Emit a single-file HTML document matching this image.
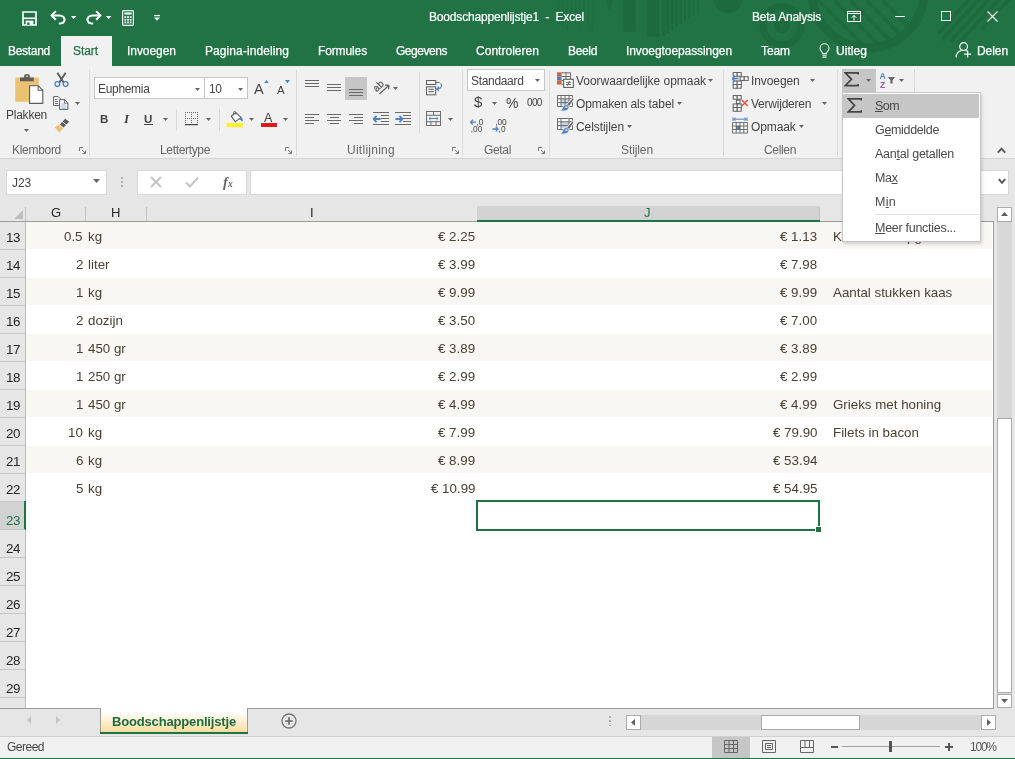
<!DOCTYPE html>
<html><head><meta charset="utf-8"><title>Boodschappenlijstje1 - Excel</title>
<style>
html,body{margin:0;padding:0;}
body{width:1015px;height:759px;overflow:hidden;position:relative;background:#fff;font-family:"Liberation Sans",sans-serif;}
.b{position:absolute;display:block;box-sizing:border-box;}
.t{position:absolute;display:block;white-space:pre;will-change:transform;}
u{text-decoration:underline;text-underline-offset:1px;}
</style></head><body>
<div class="b" style="left:0px;top:0px;width:1015px;height:66px;background:#217346;"></div>
<svg class="b" style="left:540px;top:0px;" width="475" height="66" viewBox="0 0 475 66">
<defs><clipPath id="uclip"><circle cx="328" cy="-8" r="52"/></clipPath></defs>
<g fill="#1d6a3f">
<rect x="18.0" y="0" width="1.6" height="20" opacity=".55"/><rect x="22.2" y="0" width="1.6" height="25" opacity=".55"/><rect x="26.4" y="0" width="1.6" height="30" opacity=".55"/><rect x="30.6" y="0" width="1.6" height="20" opacity=".55"/><rect x="34.8" y="0" width="1.6" height="25" opacity=".55"/><rect x="39.0" y="0" width="1.6" height="30" opacity=".55"/><rect x="43.2" y="0" width="1.6" height="20" opacity=".55"/><rect x="47.4" y="0" width="1.6" height="25" opacity=".55"/><rect x="51.6" y="0" width="1.6" height="30" opacity=".55"/>
<path d="M66 0H73L69.5 11Z"/>
<path d="M83.4 0H95.4V29Q95.4 32 92.4 32H86.4Q83.4 32 83.4 29Z"/>
<path d="M107.3 0H119.2V37H110.3Q107.3 37 107.3 34Z"/>
<rect x="122.0" y="0" width="3.0" height="36.0"/><rect x="126.4" y="0" width="2.8" height="33.1"/><rect x="130.8" y="0" width="2.6" height="30.2"/><rect x="135.2" y="0" width="2.4" height="27.3"/><rect x="139.6" y="0" width="2.2" height="24.4"/><rect x="144.0" y="0" width="2.0" height="21.5"/><rect x="148.4" y="0" width="1.8" height="18.6"/><rect x="152.8" y="0" width="1.6" height="15.7"/><rect x="157.2" y="0" width="1.4" height="12.8"/>
<path d="M173.4 0h29.2a14.6 13 0 0 1-29.2 0z"/>
</g>
<g fill="none" stroke="#1d6a3f">
<circle cx="242" cy="25.5" r="19" stroke-width="7"/>
<circle cx="242" cy="25.5" r="5" stroke-width="6"/>
<circle cx="328" cy="-8" r="56" stroke-width="9"/>
<g clip-path="url(#uclip)" stroke-width="4"><path d="M272 -6l60 60M282 -12l60 60M292 -18l60 60M302 -24l60 60M312 -30l60 60"/></g>
<path d="M442 -4l-40 44M452 -4l-42 46M462 -4l-44 48M432 -4l-34 38M472 -4l-30 33" stroke-width="4"/>
</g></svg>
<div class="b" style="left:61px;top:36px;width:51px;height:30px;background:#f1f1f1;"></div>
<div class="b" style="left:0px;top:66px;width:1015px;height:93px;background:#f1f1f1;"></div>
<div class="b" style="left:0px;top:158px;width:1015px;height:1px;background:#d4d4d4;"></div>
<div class="b" style="left:0px;top:159px;width:1015px;height:63px;background:#e6e6e6;"></div>
<span class="t" style="top:9.0px;line-height:16px;font-size:12px;color:#fff;letter-spacing:-0.170px;left:429px;-webkit-text-stroke:0.2px;">Boodschappenlijstje1  -  Excel</span>
<span class="t" style="top:9.0px;line-height:16px;font-size:12px;color:#fff;letter-spacing:-0.234px;left:752px;-webkit-text-stroke:0.2px;">Beta Analysis</span>
<span class="t" style="top:43.0px;line-height:16px;font-size:12px;color:#fff;letter-spacing:-0.290px;left:8px;-webkit-text-stroke:0.25px;">Bestand</span>
<span class="t" style="top:43.0px;line-height:16px;font-size:12px;color:#217346;letter-spacing:-0.068px;left:73px;-webkit-text-stroke:0.25px;">Start</span>
<span class="t" style="top:43.0px;line-height:16px;font-size:12px;color:#fff;letter-spacing:-0.047px;left:127px;-webkit-text-stroke:0.25px;">Invoegen</span>
<span class="t" style="top:43.0px;line-height:16px;font-size:12px;color:#fff;letter-spacing:0.085px;left:205px;-webkit-text-stroke:0.25px;">Pagina-indeling</span>
<span class="t" style="top:43.0px;line-height:16px;font-size:12px;color:#fff;letter-spacing:-0.126px;left:318px;-webkit-text-stroke:0.25px;">Formules</span>
<span class="t" style="top:43.0px;line-height:16px;font-size:12px;color:#fff;letter-spacing:-0.463px;left:396px;-webkit-text-stroke:0.25px;">Gegevens</span>
<span class="t" style="top:43.0px;line-height:16px;font-size:12px;color:#fff;letter-spacing:0.027px;left:476px;-webkit-text-stroke:0.25px;">Controleren</span>
<span class="t" style="top:43.0px;line-height:16px;font-size:12px;color:#fff;letter-spacing:-0.338px;left:568px;-webkit-text-stroke:0.25px;">Beeld</span>
<span class="t" style="top:43.0px;line-height:16px;font-size:12px;color:#fff;letter-spacing:-0.079px;left:626px;-webkit-text-stroke:0.25px;">Invoegtoepassingen</span>
<span class="t" style="top:43.0px;line-height:16px;font-size:12px;color:#fff;letter-spacing:-0.086px;left:761px;-webkit-text-stroke:0.25px;">Team</span>
<span class="t" style="top:43.0px;line-height:16px;font-size:12px;color:#fff;letter-spacing:0.053px;left:836px;-webkit-text-stroke:0.25px;">Uitleg</span>
<span class="t" style="top:43.0px;line-height:16px;font-size:12px;color:#fff;letter-spacing:-0.071px;left:977px;-webkit-text-stroke:0.25px;">Delen</span>
<div class="b" style="left:89px;top:70px;width:1px;height:86px;background:#dadada;"></div>
<div class="b" style="left:296px;top:70px;width:1px;height:86px;background:#dadada;"></div>
<div class="b" style="left:462px;top:70px;width:1px;height:86px;background:#dadada;"></div>
<div class="b" style="left:549px;top:70px;width:1px;height:86px;background:#dadada;"></div>
<div class="b" style="left:723px;top:70px;width:1px;height:86px;background:#dadada;"></div>
<div class="b" style="left:837px;top:70px;width:1px;height:86px;background:#dadada;"></div>
<span class="t" style="top:142.0px;line-height:16px;font-size:12px;color:#666;letter-spacing:-0.295px;left:12px;">Klembord</span>
<span class="t" style="top:142.0px;line-height:16px;font-size:12px;color:#666;letter-spacing:-0.337px;left:160px;">Lettertype</span>
<span class="t" style="top:142.0px;line-height:16px;font-size:12px;color:#666;letter-spacing:0.265px;left:347px;">Uitlijning</span>
<span class="t" style="top:142.0px;line-height:16px;font-size:12px;color:#666;letter-spacing:-0.336px;left:484px;">Getal</span>
<span class="t" style="top:142.0px;line-height:16px;font-size:12px;color:#666;letter-spacing:-0.098px;left:621px;">Stijlen</span>
<span class="t" style="top:142.0px;line-height:16px;font-size:12px;color:#666;letter-spacing:-0.337px;left:764px;">Cellen</span>
<svg class="b" style="left:79px;top:147px;" width="7" height="7" viewBox="0 0 7 7"><path d="M0.5 4V0.5H4M3 3L6.5 6.5M6.5 3.5V6.5H3.5" fill="none" stroke="#777" stroke-width="1"/></svg>
<svg class="b" style="left:285px;top:147px;" width="7" height="7" viewBox="0 0 7 7"><path d="M0.5 4V0.5H4M3 3L6.5 6.5M6.5 3.5V6.5H3.5" fill="none" stroke="#777" stroke-width="1"/></svg>
<svg class="b" style="left:452px;top:147px;" width="7" height="7" viewBox="0 0 7 7"><path d="M0.5 4V0.5H4M3 3L6.5 6.5M6.5 3.5V6.5H3.5" fill="none" stroke="#777" stroke-width="1"/></svg>
<svg class="b" style="left:538px;top:147px;" width="7" height="7" viewBox="0 0 7 7"><path d="M0.5 4V0.5H4M3 3L6.5 6.5M6.5 3.5V6.5H3.5" fill="none" stroke="#777" stroke-width="1"/></svg>
<span class="t" style="top:107.0px;line-height:16px;font-size:12px;color:#444;letter-spacing:-0.242px;left:6px;">Plakken</span>
<svg class="b" style="left:24.0px;top:128.5px;" width="5" height="3" viewBox="0 0 5 3"><path d="M0 0H5L2.5 3Z" fill="#666"/></svg>
<svg class="b" style="left:75.0px;top:101.5px;" width="5" height="3" viewBox="0 0 5 3"><path d="M0 0H5L2.5 3Z" fill="#666"/></svg>
<div class="b" style="left:94px;top:77px;width:111px;height:22px;background:#fff;border:1px solid #c6c6c6;"></div>
<div class="b" style="left:204px;top:77px;width:44px;height:22px;background:#fff;border:1px solid #c6c6c6;"></div>
<span class="t" style="top:81.0px;line-height:16px;font-size:12px;color:#444;letter-spacing:-0.317px;left:97.5px;">Euphemia</span>
<span class="t" style="top:81.0px;line-height:16px;font-size:12px;color:#444;letter-spacing:-0.424px;left:208.5px;">10</span>
<svg class="b" style="left:195.0px;top:88.0px;" width="5" height="3" viewBox="0 0 5 3"><path d="M0 0H5L2.5 3Z" fill="#666"/></svg>
<svg class="b" style="left:238.0px;top:88.0px;" width="5" height="3" viewBox="0 0 5 3"><path d="M0 0H5L2.5 3Z" fill="#666"/></svg>
<span class="t" style="top:110.8px;line-height:16px;font-size:11.5px;color:#444;letter-spacing:0.295px;font-weight:700;left:100px;">B</span>
<span class="t" style="top:110.8px;line-height:16px;font-size:12px;color:#444;font-weight:700;font-style:italic;left:123.5px;font-family:'Liberation Serif',serif;font-size:13px;">I</span>
<span class="t" style="top:110.6px;line-height:16px;font-size:11.5px;color:#444;letter-spacing:0.395px;font-weight:700;left:144.3px;">U</span>
<div class="b" style="left:144.3px;top:124px;width:8.8px;height:1.1px;background:#444;"></div>
<svg class="b" style="left:163.0px;top:118.0px;" width="5" height="3" viewBox="0 0 5 3"><path d="M0 0H5L2.5 3Z" fill="#666"/></svg>
<svg class="b" style="left:206.0px;top:118.0px;" width="5" height="3" viewBox="0 0 5 3"><path d="M0 0H5L2.5 3Z" fill="#666"/></svg>
<svg class="b" style="left:249.0px;top:118.0px;" width="5" height="3" viewBox="0 0 5 3"><path d="M0 0H5L2.5 3Z" fill="#666"/></svg>
<svg class="b" style="left:283.0px;top:118.0px;" width="5" height="3" viewBox="0 0 5 3"><path d="M0 0H5L2.5 3Z" fill="#666"/></svg>
<div class="b" style="left:176px;top:109px;width:1px;height:22px;background:#dadada;"></div>
<div class="b" style="left:219px;top:109px;width:1px;height:22px;background:#dadada;"></div>
<div class="b" style="left:345px;top:77px;width:22.3px;height:23px;background:#c6c6c6;"></div>
<svg class="b" style="left:393.2px;top:86.5px;" width="5" height="3" viewBox="0 0 5 3"><path d="M0 0H5L2.5 3Z" fill="#666"/></svg>
<svg class="b" style="left:447.9px;top:118.0px;" width="5" height="3" viewBox="0 0 5 3"><path d="M0 0H5L2.5 3Z" fill="#666"/></svg>
<div class="b" style="left:418.5px;top:72px;width:1px;height:61px;background:#dadada;"></div>
<div class="b" style="left:467px;top:69px;width:78px;height:22px;background:#fff;border:1px solid #c6c6c6;"></div>
<span class="t" style="top:72.7px;line-height:16px;font-size:12px;color:#444;letter-spacing:-0.320px;left:470.5px;">Standaard</span>
<svg class="b" style="left:535.0px;top:79.0px;" width="5" height="3" viewBox="0 0 5 3"><path d="M0 0H5L2.5 3Z" fill="#666"/></svg>
<span class="t" style="top:94.3px;line-height:16px;font-size:15px;color:#444;letter-spacing:0.458px;left:474.2px;">$</span>
<svg class="b" style="left:492.2px;top:101.5px;" width="5" height="3" viewBox="0 0 5 3"><path d="M0 0H5L2.5 3Z" fill="#666"/></svg>
<span class="t" style="top:94.8px;line-height:16px;font-size:14px;color:#444;letter-spacing:1.052px;left:506px;">%</span>
<span class="t" style="top:95.3px;line-height:16px;font-size:10px;color:#444;letter-spacing:-0.628px;left:526.6px;">000</span>
<span class="t" style="top:73.0px;line-height:16px;font-size:12px;color:#444;letter-spacing:-0.034px;left:576px;">Voorwaardelijke opmaak</span>
<svg class="b" style="left:708.0px;top:79.3px;" width="5" height="3" viewBox="0 0 5 3"><path d="M0 0H5L2.5 3Z" fill="#666"/></svg>
<span class="t" style="top:96.0px;line-height:16px;font-size:12px;color:#444;letter-spacing:-0.121px;left:576px;">Opmaken als tabel</span>
<svg class="b" style="left:677.0px;top:102.3px;" width="5" height="3" viewBox="0 0 5 3"><path d="M0 0H5L2.5 3Z" fill="#666"/></svg>
<span class="t" style="top:119.0px;line-height:16px;font-size:12px;color:#444;letter-spacing:-0.069px;left:576px;">Celstijlen</span>
<svg class="b" style="left:627.0px;top:125.1px;" width="5" height="3" viewBox="0 0 5 3"><path d="M0 0H5L2.5 3Z" fill="#666"/></svg>
<span class="t" style="top:73.0px;line-height:16px;font-size:12px;color:#444;letter-spacing:-0.085px;left:751.3px;">Invoegen</span>
<svg class="b" style="left:810.0px;top:79.3px;" width="5" height="3" viewBox="0 0 5 3"><path d="M0 0H5L2.5 3Z" fill="#666"/></svg>
<span class="t" style="top:96.0px;line-height:16px;font-size:12px;color:#444;letter-spacing:-0.227px;left:751.3px;">Verwijderen</span>
<svg class="b" style="left:822.1px;top:102.3px;" width="5" height="3" viewBox="0 0 5 3"><path d="M0 0H5L2.5 3Z" fill="#666"/></svg>
<span class="t" style="top:119.0px;line-height:16px;font-size:12px;color:#444;letter-spacing:-0.109px;left:751.3px;">Opmaak</span>
<svg class="b" style="left:799.0px;top:125.1px;" width="5" height="3" viewBox="0 0 5 3"><path d="M0 0H5L2.5 3Z" fill="#666"/></svg>
<div class="b" style="left:841.5px;top:69px;width:34px;height:23.5px;background:#c6c6c6;"></div>
<svg class="b" style="left:866.2px;top:78.8px;" width="5" height="3" viewBox="0 0 5 3"><path d="M0 0H5L2.5 3Z" fill="#666"/></svg>
<svg class="b" style="left:899.0px;top:78.8px;" width="5" height="3" viewBox="0 0 5 3"><path d="M0 0H5L2.5 3Z" fill="#666"/></svg>
<div class="b" style="left:914px;top:69px;width:1px;height:23px;background:#dadada;"></div>
<svg class="b" style="left:996.5px;top:147.3px;" width="9" height="7" viewBox="0 0 9 7"><path d="M0.8 5.6L4.5 1.6L8.2 5.6" fill="none" stroke="#5a5a5a" stroke-width="2"/></svg>
<div class="b" style="left:5.5px;top:169.5px;width:101px;height:25px;background:#fff;border:1px solid #d8d8d8;"></div>
<span class="t" style="top:174.5px;line-height:16px;font-size:12px;color:#444;letter-spacing:-0.116px;left:12px;">J23</span>
<svg class="b" style="left:93.0px;top:179.0px;" width="7" height="4" viewBox="0 0 7 4"><path d="M0 0H7L3.5 4Z" fill="#666"/></svg>
<div class="b" style="left:121.3px;top:177px;width:1.8px;height:1.8px;background:#b0b0b0;"></div>
<div class="b" style="left:121.3px;top:181px;width:1.8px;height:1.8px;background:#b0b0b0;"></div>
<div class="b" style="left:121.3px;top:185.2px;width:1.8px;height:1.8px;background:#b0b0b0;"></div>
<div class="b" style="left:137px;top:169.5px;width:109.5px;height:25px;background:#fff;border:1px solid #d8d8d8;"></div>
<div class="b" style="left:250px;top:169.5px;width:759px;height:25px;background:#fff;border:1px solid #d8d8d8;"></div>
<svg class="b" style="left:150px;top:176px;" width="12" height="12" viewBox="0 0 12 12"><path d="M1 1L11 11M11 1L1 11" stroke="#c3c3c3" stroke-width="1.9" fill="none"/></svg>
<svg class="b" style="left:185px;top:176px;" width="14" height="12" viewBox="0 0 14 12"><path d="M1 6.5L5 10.5L13 1.5" stroke="#c3c3c3" stroke-width="2" fill="none"/></svg>
<span class="t" style="top:173.5px;line-height:16px;font-size:13px;color:#666;font-weight:700;font-style:italic;left:222.5px;font-family:'Liberation Serif',serif;font-size:14.5px;">f</span>
<span class="t" style="top:176.0px;line-height:16px;font-size:9.5px;color:#666;font-weight:700;font-style:italic;left:228px;font-family:'Liberation Serif',serif;">x</span>
<svg class="b" style="left:997.5px;top:178px;" width="8" height="7" viewBox="0 0 8 7"><path d="M0.8 1.2L4 4.8L7.2 1.2" fill="none" stroke="#555" stroke-width="2"/></svg>
<div class="b" style="left:26px;top:222px;width:968px;height:487px;background:#fff;"></div>
<div class="b" style="left:0px;top:204px;width:994px;height:17px;background:#e6e6e6;"></div>
<div class="b" style="left:477px;top:205.5px;width:342px;height:15.5px;background:#d2d2d2;"></div>
<div class="b" style="left:477px;top:220px;width:343px;height:2px;background:#217346;"></div>
<div class="b" style="left:0px;top:221px;width:994px;height:1px;background:#9b9b9b;"></div>
<div class="b" style="left:477px;top:220px;width:343px;height:2px;background:#217346;"></div>
<div class="b" style="left:25px;top:207px;width:1px;height:14px;background:#c3c3c3;"></div>
<div class="b" style="left:85px;top:207px;width:1px;height:14px;background:#c3c3c3;"></div>
<div class="b" style="left:146px;top:207px;width:1px;height:14px;background:#c3c3c3;"></div>
<div class="b" style="left:819px;top:207px;width:1px;height:13px;background:#c3c3c3;"></div>
<svg class="b" style="left:13.5px;top:209.5px;" width="9" height="9" viewBox="0 0 9 9"><path d="M9 0V9H0Z" fill="#bdbdbd"/></svg>
<span class="t" style="top:204.5px;line-height:16px;font-size:13px;color:#262626;left:50.9441171875px;">G</span>
<span class="t" style="top:204.5px;line-height:16px;font-size:13px;color:#262626;left:111.3058828125px;">H</span>
<span class="t" style="top:204.5px;line-height:16px;font-size:13px;color:#262626;left:310.1941171875px;">I</span>
<span class="t" style="top:204.5px;line-height:16px;font-size:13px;color:#217346;left:644.25px;">J</span>
<div class="b" style="left:0px;top:222px;width:25px;height:487px;background:#e6e6e6;"></div>
<div class="b" style="left:25px;top:222px;width:1px;height:487px;background:#bcbcbc;"></div>
<div class="b" style="left:0px;top:249px;width:25px;height:1px;background:#c6c6c6;"></div>
<span class="t" style="top:228.7px;line-height:18px;font-size:13.33px;color:#262626;left:5.8864371875px;letter-spacing:-0.35px;">13</span>
<div class="b" style="left:0px;top:277px;width:25px;height:1px;background:#c6c6c6;"></div>
<span class="t" style="top:256.7px;line-height:18px;font-size:13.33px;color:#262626;left:5.8864371875px;letter-spacing:-0.35px;">14</span>
<div class="b" style="left:0px;top:305px;width:25px;height:1px;background:#c6c6c6;"></div>
<span class="t" style="top:284.7px;line-height:18px;font-size:13.33px;color:#262626;left:5.8864371875px;letter-spacing:-0.35px;">15</span>
<div class="b" style="left:0px;top:333px;width:25px;height:1px;background:#c6c6c6;"></div>
<span class="t" style="top:312.7px;line-height:18px;font-size:13.33px;color:#262626;left:5.8864371875px;letter-spacing:-0.35px;">16</span>
<div class="b" style="left:0px;top:361px;width:25px;height:1px;background:#c6c6c6;"></div>
<span class="t" style="top:340.7px;line-height:18px;font-size:13.33px;color:#262626;left:5.8864371875px;letter-spacing:-0.35px;">17</span>
<div class="b" style="left:0px;top:389px;width:25px;height:1px;background:#c6c6c6;"></div>
<span class="t" style="top:368.7px;line-height:18px;font-size:13.33px;color:#262626;left:5.8864371875px;letter-spacing:-0.35px;">18</span>
<div class="b" style="left:0px;top:417px;width:25px;height:1px;background:#c6c6c6;"></div>
<span class="t" style="top:396.7px;line-height:18px;font-size:13.33px;color:#262626;left:5.8864371875px;letter-spacing:-0.35px;">19</span>
<div class="b" style="left:0px;top:445px;width:25px;height:1px;background:#c6c6c6;"></div>
<span class="t" style="top:424.7px;line-height:18px;font-size:13.33px;color:#262626;left:5.8864371875px;letter-spacing:-0.35px;">20</span>
<div class="b" style="left:0px;top:473px;width:25px;height:1px;background:#c6c6c6;"></div>
<span class="t" style="top:452.7px;line-height:18px;font-size:13.33px;color:#262626;left:5.8864371875px;letter-spacing:-0.35px;">21</span>
<div class="b" style="left:0px;top:501px;width:25px;height:1px;background:#c6c6c6;"></div>
<span class="t" style="top:480.7px;line-height:18px;font-size:13.33px;color:#262626;left:5.8864371875px;letter-spacing:-0.35px;">22</span>
<div class="b" style="left:0px;top:502px;width:25px;height:28px;background:#d2d2d2;"></div>
<div class="b" style="left:24px;top:501px;width:2px;height:29px;background:#217346;"></div>
<div class="b" style="left:0px;top:529px;width:25px;height:1px;background:#c6c6c6;"></div>
<span class="t" style="top:512.2px;line-height:18px;font-size:13.33px;color:#217346;left:5.8864371875px;letter-spacing:-0.35px;">23</span>
<div class="b" style="left:0px;top:557px;width:25px;height:1px;background:#c6c6c6;"></div>
<span class="t" style="top:540.2px;line-height:18px;font-size:13.33px;color:#262626;left:5.8864371875px;letter-spacing:-0.35px;">24</span>
<div class="b" style="left:0px;top:585px;width:25px;height:1px;background:#c6c6c6;"></div>
<span class="t" style="top:568.2px;line-height:18px;font-size:13.33px;color:#262626;left:5.8864371875px;letter-spacing:-0.35px;">25</span>
<div class="b" style="left:0px;top:613px;width:25px;height:1px;background:#c6c6c6;"></div>
<span class="t" style="top:596.2px;line-height:18px;font-size:13.33px;color:#262626;left:5.8864371875px;letter-spacing:-0.35px;">26</span>
<div class="b" style="left:0px;top:641px;width:25px;height:1px;background:#c6c6c6;"></div>
<span class="t" style="top:624.2px;line-height:18px;font-size:13.33px;color:#262626;left:5.8864371875px;letter-spacing:-0.35px;">27</span>
<div class="b" style="left:0px;top:669px;width:25px;height:1px;background:#c6c6c6;"></div>
<span class="t" style="top:652.2px;line-height:18px;font-size:13.33px;color:#262626;left:5.8864371875px;letter-spacing:-0.35px;">28</span>
<div class="b" style="left:0px;top:697px;width:25px;height:1px;background:#c6c6c6;"></div>
<span class="t" style="top:680.2px;line-height:18px;font-size:13.33px;color:#262626;left:5.8864371875px;letter-spacing:-0.35px;">29</span>
<div class="b" style="left:0px;top:725px;width:25px;height:1px;background:#c6c6c6;"></div>
<div class="b" style="left:26px;top:221.5px;width:966px;height:27.8px;background:#f9f7f3;"></div>
<span class="t" style="top:229.2px;line-height:16px;font-size:13.33px;color:#493f33;right:932px;">0.5</span>
<span class="t" style="top:229.2px;line-height:16px;font-size:13.33px;color:#493f33;left:88px;">kg</span>
<span class="t" style="top:229.2px;line-height:16px;font-size:13.33px;color:#493f33;right:539.5px;">€ 2.25</span>
<span class="t" style="top:229.2px;line-height:16px;font-size:13.33px;color:#493f33;right:198px;">€ 1.13</span>
<span class="t" style="top:229.2px;line-height:16px;font-size:13.33px;color:#493f33;left:833px;">Kaas en ei opgeteld</span>
<span class="t" style="top:257.2px;line-height:16px;font-size:13.33px;color:#493f33;right:932px;">2</span>
<span class="t" style="top:257.2px;line-height:16px;font-size:13.33px;color:#493f33;left:88px;">liter</span>
<span class="t" style="top:257.2px;line-height:16px;font-size:13.33px;color:#493f33;right:539.5px;">€ 3.99</span>
<span class="t" style="top:257.2px;line-height:16px;font-size:13.33px;color:#493f33;right:198px;">€ 7.98</span>
<div class="b" style="left:26px;top:277.5px;width:966px;height:27.8px;background:#f9f7f3;"></div>
<span class="t" style="top:285.2px;line-height:16px;font-size:13.33px;color:#493f33;right:932px;">1</span>
<span class="t" style="top:285.2px;line-height:16px;font-size:13.33px;color:#493f33;left:88px;">kg</span>
<span class="t" style="top:285.2px;line-height:16px;font-size:13.33px;color:#493f33;right:539.5px;">€ 9.99</span>
<span class="t" style="top:285.2px;line-height:16px;font-size:13.33px;color:#493f33;right:198px;">€ 9.99</span>
<span class="t" style="top:285.2px;line-height:16px;font-size:13.33px;color:#493f33;left:833px;">Aantal stukken kaas</span>
<span class="t" style="top:313.2px;line-height:16px;font-size:13.33px;color:#493f33;right:932px;">2</span>
<span class="t" style="top:313.2px;line-height:16px;font-size:13.33px;color:#493f33;left:88px;">dozijn</span>
<span class="t" style="top:313.2px;line-height:16px;font-size:13.33px;color:#493f33;right:539.5px;">€ 3.50</span>
<span class="t" style="top:313.2px;line-height:16px;font-size:13.33px;color:#493f33;right:198px;">€ 7.00</span>
<div class="b" style="left:26px;top:333.5px;width:966px;height:27.8px;background:#f9f7f3;"></div>
<span class="t" style="top:341.2px;line-height:16px;font-size:13.33px;color:#493f33;right:932px;">1</span>
<span class="t" style="top:341.2px;line-height:16px;font-size:13.33px;color:#493f33;left:88px;">450 gr</span>
<span class="t" style="top:341.2px;line-height:16px;font-size:13.33px;color:#493f33;right:539.5px;">€ 3.89</span>
<span class="t" style="top:341.2px;line-height:16px;font-size:13.33px;color:#493f33;right:198px;">€ 3.89</span>
<span class="t" style="top:369.2px;line-height:16px;font-size:13.33px;color:#493f33;right:932px;">1</span>
<span class="t" style="top:369.2px;line-height:16px;font-size:13.33px;color:#493f33;left:88px;">250 gr</span>
<span class="t" style="top:369.2px;line-height:16px;font-size:13.33px;color:#493f33;right:539.5px;">€ 2.99</span>
<span class="t" style="top:369.2px;line-height:16px;font-size:13.33px;color:#493f33;right:198px;">€ 2.99</span>
<div class="b" style="left:26px;top:389.5px;width:966px;height:27.8px;background:#f9f7f3;"></div>
<span class="t" style="top:397.2px;line-height:16px;font-size:13.33px;color:#493f33;right:932px;">1</span>
<span class="t" style="top:397.2px;line-height:16px;font-size:13.33px;color:#493f33;left:88px;">450 gr</span>
<span class="t" style="top:397.2px;line-height:16px;font-size:13.33px;color:#493f33;right:539.5px;">€ 4.99</span>
<span class="t" style="top:397.2px;line-height:16px;font-size:13.33px;color:#493f33;right:198px;">€ 4.99</span>
<span class="t" style="top:397.2px;line-height:16px;font-size:13.33px;color:#493f33;left:833px;">Grieks met honing</span>
<span class="t" style="top:425.2px;line-height:16px;font-size:13.33px;color:#493f33;right:932px;">10</span>
<span class="t" style="top:425.2px;line-height:16px;font-size:13.33px;color:#493f33;left:88px;">kg</span>
<span class="t" style="top:425.2px;line-height:16px;font-size:13.33px;color:#493f33;right:539.5px;">€ 7.99</span>
<span class="t" style="top:425.2px;line-height:16px;font-size:13.33px;color:#493f33;right:198px;">€ 79.90</span>
<span class="t" style="top:425.2px;line-height:16px;font-size:13.33px;color:#493f33;left:833px;">Filets in bacon</span>
<div class="b" style="left:26px;top:445.5px;width:966px;height:27.8px;background:#f9f7f3;"></div>
<span class="t" style="top:453.2px;line-height:16px;font-size:13.33px;color:#493f33;right:932px;">6</span>
<span class="t" style="top:453.2px;line-height:16px;font-size:13.33px;color:#493f33;left:88px;">kg</span>
<span class="t" style="top:453.2px;line-height:16px;font-size:13.33px;color:#493f33;right:539.5px;">€ 8.99</span>
<span class="t" style="top:453.2px;line-height:16px;font-size:13.33px;color:#493f33;right:198px;">€ 53.94</span>
<span class="t" style="top:481.2px;line-height:16px;font-size:13.33px;color:#493f33;right:932px;">5</span>
<span class="t" style="top:481.2px;line-height:16px;font-size:13.33px;color:#493f33;left:88px;">kg</span>
<span class="t" style="top:481.2px;line-height:16px;font-size:13.33px;color:#493f33;right:539.5px;">€ 10.99</span>
<span class="t" style="top:481.2px;line-height:16px;font-size:13.33px;color:#493f33;right:198px;">€ 54.95</span>
<div class="b" style="left:476px;top:500px;width:344px;height:31px;border:2px solid #217346;"></div>
<div class="b" style="left:815px;top:526px;width:7px;height:7px;background:#217346;border:1px solid #fff;"></div>
<div class="b" style="left:994px;top:204px;width:21px;height:505px;background:#e6e6e6;"></div>
<div class="b" style="left:993px;top:222px;width:1px;height:487px;background:#9b9b9b;"></div>
<div class="b" style="left:997px;top:222px;width:15px;height:472px;background:#d8d8d8;"></div>
<div class="b" style="left:997px;top:207px;width:15px;height:15px;background:#fff;border:1px solid #ababab;"></div>
<svg class="b" style="left:1001px;top:212px;" width="7" height="4" viewBox="0 0 7 4"><path d="M0 4L3.5 0L7 4Z" fill="#606060"/></svg>
<div class="b" style="left:997px;top:418px;width:15px;height:275px;background:#fff;border:1px solid #ababab;"></div>
<div class="b" style="left:997px;top:694px;width:15px;height:14px;background:#fff;border:1px solid #ababab;"></div>
<svg class="b" style="left:1001px;top:699px;" width="7" height="4" viewBox="0 0 7 4"><path d="M0 0L3.5 4L7 0Z" fill="#606060"/></svg>
<div class="b" style="left:0px;top:708px;width:1015px;height:28.5px;background:#e6e6e6;"></div>
<div class="b" style="left:0px;top:708px;width:994px;height:1px;background:#9b9b9b;"></div>
<svg class="b" style="left:26px;top:716px;" width="6" height="8" viewBox="0 0 6 8"><path d="M5 0L1 4L5 8Z" fill="#c4c4c4"/></svg>
<svg class="b" style="left:55px;top:716px;" width="6" height="8" viewBox="0 0 6 8"><path d="M1 0L5 4L1 8Z" fill="#c4c4c4"/></svg>
<div class="b" style="left:100px;top:708px;width:148px;height:25px;background:linear-gradient(#ffffff 15%,#fadb98);border-left:1px solid #9b9b9b;border-right:1px solid #9b9b9b;"></div>
<div class="b" style="left:100px;top:732px;width:148px;height:2px;background:#217346;"></div>
<span class="t" style="top:713.6px;line-height:16px;font-size:13px;color:#1e6b41;letter-spacing:-0.165px;font-weight:700;left:112px;">Boodschappenlijstje</span>
<svg class="b" style="left:281px;top:713px;" width="16" height="16" viewBox="0 0 16 16"><circle cx="8" cy="8" r="7" fill="none" stroke="#777" stroke-width="1.3"/><path d="M8 4.2V11.8M4.2 8H11.8" stroke="#666" stroke-width="1.6"/></svg>
<div class="b" style="left:608.8px;top:716.3px;width:1.8px;height:1.8px;background:#adadad;"></div>
<div class="b" style="left:608.8px;top:720.3px;width:1.8px;height:1.8px;background:#adadad;"></div>
<div class="b" style="left:608.8px;top:724.5px;width:1.8px;height:1.8px;background:#adadad;"></div>
<div class="b" style="left:626px;top:715px;width:370px;height:15px;background:#d6d6d6;"></div>
<div class="b" style="left:626px;top:715px;width:15px;height:15px;background:#fff;border:1px solid #ababab;"></div>
<svg class="b" style="left:631px;top:719px;" width="4" height="7" viewBox="0 0 4 7"><path d="M4 0L0 3.5L4 7Z" fill="#606060"/></svg>
<div class="b" style="left:981px;top:715px;width:15px;height:15px;background:#fff;border:1px solid #ababab;"></div>
<svg class="b" style="left:987px;top:719px;" width="4" height="7" viewBox="0 0 4 7"><path d="M0 0L4 3.5L0 7Z" fill="#606060"/></svg>
<div class="b" style="left:761px;top:715px;width:99px;height:15px;background:#fff;border:1px solid #ababab;"></div>
<div class="b" style="left:0px;top:736.5px;width:1015px;height:22px;background:#f1f1f1;"></div>
<div class="b" style="left:0px;top:736px;width:1015px;height:1px;background:#d0d0d0;"></div>
<div class="b" style="left:0px;top:757.5px;width:1015px;height:1.5px;background:#217346;"></div>
<span class="t" style="top:738.5px;line-height:16px;font-size:12px;color:#444;letter-spacing:-0.504px;left:7px;">Gereed</span>
<div class="b" style="left:712px;top:736.5px;width:38px;height:21px;background:#c6c6c6;"></div>
<svg class="b" style="left:724px;top:740px;" width="14" height="13" viewBox="0 0 14 13"><path d="M0.5 0.5H13.5V12.5H0.5ZM0.5 4.5H13.5M0.5 8.5H13.5M5 0.5V12.5M9.5 0.5V12.5" fill="none" stroke="#666" stroke-width="1"/></svg>
<svg class="b" style="left:762px;top:740px;" width="14" height="13" viewBox="0 0 14 13"><path d="M0.5 0.5H13.5V12.5H0.5ZM3.5 3.5H10.5V9.5H3.5ZM5 5.5H9M5 7.5H9" fill="none" stroke="#666" stroke-width="1"/></svg>
<svg class="b" style="left:800px;top:739.6px;" width="14" height="13" viewBox="0 0 14 13"><path d="M0.5 0.5H13.5V12.5H0.5ZM5 0.5V7.5H9.5V0.5M0.5 7.5H13.5" fill="none" stroke="#666" stroke-width="1"/></svg>
<div class="b" style="left:831px;top:746px;width:7px;height:2px;background:#555;"></div>
<div class="b" style="left:842px;top:746px;width:98px;height:1px;background:#a0a0a0;"></div>
<div class="b" style="left:889px;top:741px;width:3px;height:11px;background:#555;"></div>
<div class="b" style="left:945px;top:746px;width:8px;height:2px;background:#555;"></div>
<div class="b" style="left:948px;top:743px;width:2px;height:8px;background:#555;"></div>
<span class="t" style="top:738.6px;line-height:16px;font-size:12px;color:#555;letter-spacing:-1.223px;left:970px;">100%</span>
<svg class="b" style="left:21.5px;top:10.5px;" width="15" height="15" viewBox="0 0 15 15"><path d="M1 1H14V14H1Z" fill="none" stroke="#fff" stroke-width="1.7"/>
<path d="M1 7.3H14" stroke="#fff" stroke-width="1.6"/>
<path d="M3.6 9.6H11.4V14H3.6Z" fill="#fff"/><rect x="5.2" y="11.4" width="2.3" height="2.6" fill="#217346"/></svg>
<svg class="b" style="left:50px;top:10px;" width="17" height="15" viewBox="0 0 17 15"><path d="M5.9 1.1L1.6 5.4L5.9 9.7" fill="none" stroke="#fff" stroke-width="2" stroke-linejoin="miter"/>
<path d="M2 5.4H9.2C13.4 5.4 15 8.2 14.4 10.4C13.8 12.8 11.4 13.6 8.8 13.5" fill="none" stroke="#fff" stroke-width="2"/></svg>
<svg class="b" style="left:71.3px;top:16.2px;" width="5.4" height="3.2" viewBox="0 0 5.4 3.2"><path d="M0 0H5.4L2.7 3.2Z" fill="#fff"/></svg>
<svg class="b" style="left:85px;top:10px;" width="17" height="15" viewBox="0 0 17 15"><g transform="translate(17,0) scale(-1,1)"><path d="M5.9 1.1L1.6 5.4L5.9 9.7" fill="none" stroke="#fff" stroke-width="2"/>
<path d="M2 5.4H9.2C13.4 5.4 15 8.2 14.4 10.4C13.8 12.8 11.4 13.6 8.8 13.5" fill="none" stroke="#fff" stroke-width="2"/></g></svg>
<svg class="b" style="left:106.3px;top:16.2px;" width="5.4" height="3.2" viewBox="0 0 5.4 3.2"><path d="M0 0H5.4L2.7 3.2Z" fill="#fff"/></svg>
<svg class="b" style="left:122px;top:10px;" width="12" height="16" viewBox="0 0 12 16"><rect x="0.6" y="0.6" width="10.8" height="14.8" rx="1.2" fill="none" stroke="#fff" stroke-width="1.2"/>
<rect x="2.4" y="2.4" width="7.2" height="2.2" fill="#fff"/>
<g fill="#fff"><rect x="2.4" y="6.2" width="1.8" height="1.8"/><rect x="5.1" y="6.2" width="1.8" height="1.8"/><rect x="7.8" y="6.2" width="1.8" height="1.8"/>
<rect x="2.4" y="8.9" width="1.8" height="1.8"/><rect x="5.1" y="8.9" width="1.8" height="1.8"/><rect x="7.8" y="8.9" width="1.8" height="1.8"/>
<rect x="2.4" y="11.6" width="1.8" height="1.8"/><rect x="5.1" y="11.6" width="1.8" height="1.8"/><rect x="7.8" y="11.6" width="1.8" height="1.8"/></g></svg>
<svg class="b" style="left:153.5px;top:15px;" width="6" height="6" viewBox="0 0 6 6"><rect x="0" y="0" width="6" height="1.2" fill="#fff"/><path d="M0 2.6H6L3 5.8Z" fill="#fff"/></svg>
<svg class="b" style="left:846.5px;top:11px;" width="14" height="11" viewBox="0 0 14 11"><rect x="0.5" y="0.5" width="13" height="10" fill="none" stroke="#fff" stroke-width="1"/>
<path d="M0.5 2.5H13.5" stroke="#fff" stroke-width="1"/>
<path d="M7 9.5V4.5M4.8 6.6L7 4.4L9.2 6.6" fill="none" stroke="#fff" stroke-width="1"/></svg>
<div class="b" style="left:895px;top:16px;width:10px;height:1px;background:#fff;"></div>
<div class="b" style="left:941px;top:11px;width:10px;height:10px;border:1px solid #fff;"></div>
<svg class="b" style="left:987px;top:11px;" width="11" height="11" viewBox="0 0 11 11"><path d="M0.5 0.5L10.5 10.5M10.5 0.5L0.5 10.5" stroke="#fff" stroke-width="1.1" fill="none"/></svg>
<svg class="b" style="left:819px;top:42.5px;" width="11" height="15" viewBox="0 0 11 15"><path d="M3.6 10.6C3.6 8.6 1 7.8 1 5.2A4.5 4.5 0 0 1 10 5.2C10 7.8 7.4 8.6 7.4 10.6Z" fill="none" stroke="#e6f2ea" stroke-width="1.1"/>
<path d="M3.4 12.3H7.6M3.4 14.1H7.6" stroke="#e6f2ea" stroke-width="1.1"/></svg>
<svg class="b" style="left:955px;top:42px;" width="18" height="16" viewBox="0 0 18 16"><circle cx="8.6" cy="4.6" r="3.9" fill="none" stroke="#fff" stroke-width="1.2"/>
<path d="M1 15.4C1.4 11 4 9 6.6 8.5M10.6 8.5C11.6 8.7 12.2 9 12.8 9.4" fill="none" stroke="#fff" stroke-width="1.2"/>
<path d="M12.6 8.6V15.6M9.1 12.1H16.1" stroke="#fff" stroke-width="1.3"/></svg>
<svg class="b" style="left:15px;top:73px;" width="29" height="32" viewBox="0 0 29 32"><rect x="0.2" y="4.5" width="23.6" height="24.3" rx="1" fill="#ebc273"/>
<path d="M5 8.2V4.6H9.2V2.6Q9.2 0.9 12 0.9Q14.8 0.9 14.8 2.6V4.6H18.8V8.2Z" fill="#5c5c5c"/>
<circle cx="12" cy="3.3" r="1" fill="#ebc273"/>
<path d="M14.6 12.7H23.2L27.8 17.3V30.4H14.6Z" fill="#fff" stroke="#5c5c5c" stroke-width="1.1"/>
<path d="M23.2 12.7V17.3H27.8" fill="none" stroke="#5c5c5c" stroke-width="1.1"/></svg>
<svg class="b" style="left:53.5px;top:72.3px;" width="15" height="15.5" viewBox="0 0 15 15.5"><path d="M3.4 0.8L9.6 10.6M11.6 0.8L5.4 10.6" stroke="#5c5c5c" stroke-width="1.9" fill="none"/>
<circle cx="3.4" cy="12.1" r="2.4" fill="none" stroke="#4a82c3" stroke-width="1.3"/>
<circle cx="11.6" cy="12.1" r="2.4" fill="none" stroke="#4a82c3" stroke-width="1.3"/></svg>
<svg class="b" style="left:52.5px;top:96px;" width="16" height="14" viewBox="0 0 16 14"><path d="M0.6 0.6H5.2L7.4 2.8V9.4H0.6Z" fill="#fff" stroke="#5c5c5c" stroke-width="1"/>
<path d="M2 3.5H4.5M2 5.5H5M2 7.5H5" stroke="#5c5c5c" stroke-width="0.9"/>
<path d="M6.6 3.6H11.6L14.9 6.9V13.4H6.6Z" fill="#fff" stroke="#5c5c5c" stroke-width="1"/>
<path d="M11.4 3.8V7.1H14.7" fill="none" stroke="#5c5c5c" stroke-width="0.9"/>
<path d="M8.3 8H13.2M8.3 10.1H13.2M8.3 12.1H13.2" stroke="#7fa3cf" stroke-width="0.8"/></svg>
<svg class="b" style="left:53.5px;top:118px;" width="16" height="15" viewBox="0 0 16 15"><path d="M11.2 0.8L15.2 3.8L12.4 6.6L8.6 3.4Z" fill="#5c5c5c"/>
<path d="M8.2 3.9L12 7.1L9.6 9.6L5.8 6.3Z" fill="#5c5c5c"/>
<path d="M5.2 6.8L9.1 10.2L5.4 14.4L0.6 9.2Z" fill="#ebc273"/></svg>
<span class="t" style="top:81.3px;line-height:16px;font-size:14.5px;color:#444;letter-spacing:0.329px;left:254px;">A</span>
<svg class="b" style="left:264px;top:80px;" width="5" height="3.4" viewBox="0 0 5 3.4"><path d="M0 3.4L2.5 0L5 3.4Z" fill="#4a82c3"/></svg>
<span class="t" style="top:82.3px;line-height:16px;font-size:11.5px;color:#444;letter-spacing:0.729px;left:276.6px;">A</span>
<svg class="b" style="left:285px;top:80px;" width="5" height="3.4" viewBox="0 0 5 3.4"><path d="M0 0L2.5 3.4L5 0Z" fill="#4a82c3"/></svg>
<svg class="b" style="left:185px;top:112px;" width="14" height="14" viewBox="0 0 14 14"><g fill="#666"><rect x="0" y="0" width="1" height="1"/><rect x="0" y="6" width="1" height="1"/><rect x="0" y="0" width="1" height="1"/><rect x="6" y="0" width="1" height="1"/><rect x="12" y="0" width="1" height="1"/><rect x="2" y="0" width="1" height="1"/><rect x="2" y="6" width="1" height="1"/><rect x="0" y="2" width="1" height="1"/><rect x="6" y="2" width="1" height="1"/><rect x="12" y="2" width="1" height="1"/><rect x="4" y="0" width="1" height="1"/><rect x="4" y="6" width="1" height="1"/><rect x="0" y="4" width="1" height="1"/><rect x="6" y="4" width="1" height="1"/><rect x="12" y="4" width="1" height="1"/><rect x="6" y="0" width="1" height="1"/><rect x="6" y="6" width="1" height="1"/><rect x="0" y="6" width="1" height="1"/><rect x="6" y="6" width="1" height="1"/><rect x="12" y="6" width="1" height="1"/><rect x="8" y="0" width="1" height="1"/><rect x="8" y="6" width="1" height="1"/><rect x="0" y="8" width="1" height="1"/><rect x="6" y="8" width="1" height="1"/><rect x="12" y="8" width="1" height="1"/><rect x="10" y="0" width="1" height="1"/><rect x="10" y="6" width="1" height="1"/><rect x="0" y="10" width="1" height="1"/><rect x="6" y="10" width="1" height="1"/><rect x="12" y="10" width="1" height="1"/><rect x="12" y="0" width="1" height="1"/><rect x="12" y="6" width="1" height="1"/></g><rect x="0" y="12" width="13" height="1.2" fill="#444"/></svg>
<svg class="b" style="left:226px;top:111px;" width="19" height="17" viewBox="0 0 19 17"><rect x="0.6" y="12" width="16.6" height="4.2" fill="#fff02e"/>
<path d="M5.2 5.2L9.8 1.6L15 6.4L9.4 10.6Z" fill="#fff" stroke="#5c5c5c" stroke-width="1.1" stroke-linejoin="round"/>
<path d="M7.6 4.2V1.6Q7.6 0.5 8.7 0.5Q9.8 0.5 9.8 1.6V3.4" fill="none" stroke="#5c5c5c" stroke-width="1"/>
<path d="M15 6.2Q17.6 7.6 16.6 10.4Q14.6 9 13 8.2Z" fill="#4a82c3"/></svg>
<span class="t" style="top:109.5px;line-height:16px;font-size:12.5px;color:#444;letter-spacing:1.562px;left:264.3px;">A</span>
<div class="b" style="left:261.3px;top:123px;width:15.6px;height:4.2px;background:#e0191f;"></div>
<div class="b" style="left:305px;top:80px;width:14px;height:1px;background:#6a6a6a;"></div>
<div class="b" style="left:305px;top:83px;width:14px;height:1px;background:#6a6a6a;"></div>
<div class="b" style="left:305px;top:86px;width:14px;height:1px;background:#6a6a6a;"></div>
<div class="b" style="left:327px;top:84px;width:14px;height:1px;background:#6a6a6a;"></div>
<div class="b" style="left:327px;top:87px;width:14px;height:1px;background:#6a6a6a;"></div>
<div class="b" style="left:327px;top:90px;width:14px;height:1px;background:#6a6a6a;"></div>
<div class="b" style="left:349px;top:89px;width:14px;height:1px;background:#6a6a6a;"></div>
<div class="b" style="left:349px;top:92px;width:14px;height:1px;background:#6a6a6a;"></div>
<div class="b" style="left:349px;top:95px;width:14px;height:1px;background:#6a6a6a;"></div>
<div class="b" style="left:305px;top:114px;width:14px;height:1px;background:#6a6a6a;"></div>
<div class="b" style="left:305px;top:117px;width:9px;height:1px;background:#6a6a6a;"></div>
<div class="b" style="left:305px;top:120px;width:14px;height:1px;background:#6a6a6a;"></div>
<div class="b" style="left:305px;top:123px;width:9px;height:1px;background:#6a6a6a;"></div>
<div class="b" style="left:327px;top:114px;width:14px;height:1px;background:#6a6a6a;"></div>
<div class="b" style="left:329.5px;top:117px;width:9.0px;height:1px;background:#6a6a6a;"></div>
<div class="b" style="left:327px;top:120px;width:14px;height:1px;background:#6a6a6a;"></div>
<div class="b" style="left:329.5px;top:123px;width:9.0px;height:1px;background:#6a6a6a;"></div>
<div class="b" style="left:349px;top:114px;width:14px;height:1px;background:#6a6a6a;"></div>
<div class="b" style="left:354px;top:117px;width:9px;height:1px;background:#6a6a6a;"></div>
<div class="b" style="left:349px;top:120px;width:14px;height:1px;background:#6a6a6a;"></div>
<div class="b" style="left:354px;top:123px;width:9px;height:1px;background:#6a6a6a;"></div>
<div class="b" style="left:372.5px;top:112px;width:16.5px;height:1px;background:#6a6a6a;"></div>
<div class="b" style="left:381.0px;top:115px;width:8.0px;height:1px;background:#6a6a6a;"></div>
<div class="b" style="left:381.0px;top:118px;width:8.0px;height:1px;background:#6a6a6a;"></div>
<div class="b" style="left:381.0px;top:121px;width:8.0px;height:1px;background:#6a6a6a;"></div>
<div class="b" style="left:372.5px;top:124px;width:16.5px;height:1px;background:#6a6a6a;"></div>
<svg class="b" style="left:372.5px;top:114.5px;" width="8" height="8" viewBox="0 0 8 8"><path d="M0.4 4H7.6M3.6 0.8L0.6 4L3.6 7.2" fill="none" stroke="#4a82c3" stroke-width="1.8"/></svg>
<div class="b" style="left:394.5px;top:112px;width:16.5px;height:1px;background:#6a6a6a;"></div>
<div class="b" style="left:403.0px;top:115px;width:8.0px;height:1px;background:#6a6a6a;"></div>
<div class="b" style="left:403.0px;top:118px;width:8.0px;height:1px;background:#6a6a6a;"></div>
<div class="b" style="left:403.0px;top:121px;width:8.0px;height:1px;background:#6a6a6a;"></div>
<div class="b" style="left:394.5px;top:124px;width:16.5px;height:1px;background:#6a6a6a;"></div>
<svg class="b" style="left:394.5px;top:114.5px;" width="8" height="8" viewBox="0 0 8 8"><path d="M0.4 4H7.6M4.4 0.8L7.4 4L4.4 7.2" fill="none" stroke="#4a82c3" stroke-width="1.8"/></svg>
<svg class="b" style="left:372px;top:78px;" width="19" height="18" viewBox="0 0 19 18"><text x="0" y="0" transform="translate(4.8,14.2) rotate(-45)" font-size="9.8" font-family="Liberation Sans,sans-serif" fill="#5c5c5c" stroke="#5c5c5c" stroke-width="0.25">ab</text>
<path d="M7.4 16L16.6 7.6M13 7.2L16.9 7.3L16.6 11.2" fill="none" stroke="#5c5c5c" stroke-width="1.2"/></svg>
<svg class="b" style="left:426px;top:80px;" width="17" height="15.5" viewBox="0 0 17 15.5"><g fill="none" stroke="#5c5c5c" stroke-width="1"><rect x="0.5" y="0.5" width="9.2" height="4"/><path d="M9.7 2.4H13.6"/>
<rect x="0.5" y="6.8" width="9.2" height="8"/><path d="M2.4 9.3H7.8M2.4 11.7H7.8"/></g>
<path d="M14.6 3.4Q16.6 6 14.6 7.8Q13.2 8.9 10.8 8.9M13 6.6L10.6 8.9L13 11.2" fill="none" stroke="#4a82c3" stroke-width="1.1"/></svg>
<svg class="b" style="left:426px;top:111px;" width="15" height="15" viewBox="0 0 15 15"><g fill="none" stroke="#6e6e6e" stroke-width="1"><rect x="0.5" y="0.5" width="14" height="14"/>
<path d="M0.5 4.3H14.5M0.5 10.7H14.5M7.5 0.5V4.3M5 10.7V14.5M10 10.7V14.5"/></g>
<path d="M3 7.5H12M4.6 6L3 7.5L4.6 9M10.4 6L12 7.5L10.4 9" fill="none" stroke="#4a82c3" stroke-width="1"/></svg>
<svg class="b" style="left:470px;top:119px;" width="15" height="14" viewBox="0 0 15 14"><path d="M0.6 3.2H6M2.8 0.8L0.6 3.2L2.8 5.6" fill="none" stroke="#4a82c3" stroke-width="1.3"/>
<text x="6.4" y="6.4" font-size="8.3" font-family="Liberation Sans,sans-serif" fill="#444">,0</text><text x="0.8" y="13.4" font-size="8.3" font-family="Liberation Sans,sans-serif" fill="#444">,00</text></svg>
<svg class="b" style="left:492px;top:119px;" width="15" height="14" viewBox="0 0 15 14"><text x="3.2" y="6.4" font-size="8.3" font-family="Liberation Sans,sans-serif" fill="#444">,00</text>
<path d="M0.4 10H6M3.8 7.6L6 10L3.8 12.4" fill="none" stroke="#4a82c3" stroke-width="1.3"/><text x="6.6" y="13.4" font-size="8.3" font-family="Liberation Sans,sans-serif" fill="#444">,0</text></svg>
<svg class="b" style="left:557px;top:72px;" width="17" height="16" viewBox="0 0 17 16"><rect x="0" y="0.3" width="4.6" height="4.2" fill="#d2603a"/><rect x="0" y="4.5" width="4.6" height="4" fill="#4a82c3"/><rect x="0" y="8.5" width="4.6" height="4" fill="#d2603a"/>
<path d="M4.6 0.8H13.6V7M4.6 4.5H13.6M9 0.8V7M4.6 8.5H6.4M4.6 12.3H6.4" fill="none" stroke="#6a6a6a" stroke-width="1"/>
<rect x="6.7" y="7.3" width="9.6" height="8.1" fill="#fff" stroke="#5c5c5c" stroke-width="1.1"/>
<path d="M9 10.3H14M9 12.5H14M12.6 8.9L10.4 13.9" stroke="#5c5c5c" stroke-width="0.9" fill="none"/></svg>
<svg class="b" style="left:557px;top:95px;" width="17" height="16.5" viewBox="0 0 17 16.5"><rect x="0.5" y="0.5" width="15" height="11" fill="#fff"/>
<rect x="4" y="3.8" width="8" height="6" fill="#c5d3e2"/>
<path d="M0.5 0.5H15.5V11.5H0.5ZM0.5 3.8H15.5M0.5 7.6H15.5M4 0.5V11.5M8 0.5V11.5M12 0.5V11.5" fill="none" stroke="#6a6a6a" stroke-width="1"/>
<path d="M9.6 9.6L15.6 2.8L17 4.2L12.2 11.6Z" fill="#6f6f6f" stroke="#f1f1f1" stroke-width="0.9"/>
<path d="M3.4 15.9Q5.4 14.6 5.8 12.4Q6.8 9 10 9.6Q13 11 11.6 13.8Q9.6 16.6 3.4 15.9Z" fill="#4a82c3" stroke="#f1f1f1" stroke-width="0.7"/>
<ellipse cx="9.4" cy="12.2" rx="1.2" ry="0.9" fill="#dfe9f5"/></svg>
<svg class="b" style="left:557px;top:118px;" width="17" height="16.5" viewBox="0 0 17 16.5"><rect x="0.5" y="0.5" width="15" height="11" fill="#fff"/>
<rect x="4" y="3.8" width="8" height="6" fill="#c5d3e2"/>
<path d="M0.5 0.5H15.5V11.5H0.5ZM0.5 3.8H15.5M0.5 7.6H15.5M4 0.5V11.5M12 0.5V11.5" fill="none" stroke="#6a6a6a" stroke-width="1"/>
<path d="M9.6 9.6L15.6 2.8L17 4.2L12.2 11.6Z" fill="#6f6f6f" stroke="#f1f1f1" stroke-width="0.9"/>
<path d="M3.4 15.9Q5.4 14.6 5.8 12.4Q6.8 9 10 9.6Q13 11 11.6 13.8Q9.6 16.6 3.4 15.9Z" fill="#4a82c3" stroke="#f1f1f1" stroke-width="0.7"/>
<ellipse cx="9.4" cy="12.2" rx="1.2" ry="0.9" fill="#dfe9f5"/></svg>
<svg class="b" style="left:731.5px;top:71.5px;" width="17" height="17" viewBox="0 0 17 17"><g fill="#fff" stroke="#5c5c5c" stroke-width="1">
<rect x="1.2" y="0.6" width="4" height="3.6"/><rect x="5.2" y="0.6" width="4" height="3.6"/>
<rect x="1.2" y="9" width="4" height="3.6"/><rect x="5.2" y="9" width="4" height="3.6"/>
<rect x="1.2" y="12.6" width="4" height="3.6"/><rect x="5.2" y="12.6" width="4" height="3.6"/>
<rect x="8.2" y="4.8" width="4" height="3.6"/><rect x="12.2" y="4.8" width="4" height="3.6"/></g>
<path d="M0.4 6.6H6.6M3 4L0.5 6.6L3 9.2" fill="none" stroke="#4a82c3" stroke-width="1.5"/></svg>
<svg class="b" style="left:731.5px;top:94.5px;" width="17" height="17" viewBox="0 0 17 17"><g fill="#fff" stroke="#5c5c5c" stroke-width="1">
<rect x="1.2" y="0.6" width="4" height="3.6"/><rect x="5.2" y="0.6" width="4" height="3.6"/>
<rect x="4.4" y="5.2" width="3.6" height="3.2"/>
<rect x="1.2" y="9" width="4" height="3.6"/><rect x="5.2" y="9" width="4" height="3.6"/>
<rect x="1.2" y="12.6" width="4" height="3.6"/><rect x="5.2" y="12.6" width="4" height="3.6"/></g>
<path d="M9.8 5L15.8 11M15.8 5L9.8 11" fill="none" stroke="#e8503a" stroke-width="1.5"/></svg>
<svg class="b" style="left:731.5px;top:117px;" width="17" height="17" viewBox="0 0 17 17"><path d="M1 0.4V4M15 0.4V4M1.6 2.2H14.4M3.6 0.6L1.8 2.2L3.6 3.8M12.4 0.6L14.2 2.2L12.4 3.8" fill="none" stroke="#4a82c3" stroke-width="1"/>
<rect x="0.6" y="5.6" width="14.8" height="10.4" fill="#fff"/>
<rect x="4.2" y="9" width="3.8" height="3.6" fill="#4a82c3"/>
<path d="M0.6 5.6H15.4V16H0.6ZM0.6 9H15.4M0.6 12.6H15.4M4.2 5.6V16M8 5.6V16M11.8 5.6V16" fill="none" stroke="#5c5c5c" stroke-width="0.9"/></svg>
<svg class="b" style="left:844px;top:72px;" width="15" height="14.6" viewBox="0 0 15 14.6"><path d="M14.1 2.6V0.9H1.3L7.5 7.3L1.3 13.7H14.1V12.0" fill="none" stroke="#444" stroke-width="1.7" stroke-linejoin="miter"/></svg>
<svg class="b" style="left:879px;top:71px;" width="18" height="18" viewBox="0 0 18 18"><text x="0.6" y="7.6" font-size="8.6" font-family="Liberation Sans,sans-serif" font-weight="700" fill="#4a82c3">A</text>
<text x="1" y="16.6" font-size="8.6" font-family="Liberation Sans,sans-serif" font-weight="700" fill="#9a5fb0">Z</text>
<path d="M8.8 5.9H16.2L13.6 9V12.6H11.4V9Z" fill="#666"/></svg>
<div class="b" style="left:841.7px;top:92.3px;width:139px;height:149.5px;background:#fff;border:1px solid #c6c6c6;box-shadow:1px 2px 3px rgba(0,0,0,.16);"></div>
<div class="b" style="left:843.2px;top:94.2px;width:135.8px;height:23.4px;background:#c6c6c6;"></div>
<svg class="b" style="left:847px;top:98px;" width="15.2" height="14.8" viewBox="0 0 15.2 14.8"><path d="M14.299999999999999 2.6V0.9H1.3L7.6 7.4L1.3 13.9H14.299999999999999V12.200000000000001" fill="none" stroke="#444" stroke-width="1.7" stroke-linejoin="miter"/></svg>
<span class="t" style="top:98.0px;line-height:16px;font-size:12.5px;color:#4a4a4a;letter-spacing:-0.567px;left:875px;"><u>S</u>om</span>
<span class="t" style="top:122.0px;line-height:16px;font-size:12.5px;color:#4a4a4a;letter-spacing:-0.340px;left:875px;">G<u>e</u>middelde</span>
<span class="t" style="top:146.0px;line-height:16px;font-size:12.5px;color:#4a4a4a;letter-spacing:-0.247px;left:875px;">Aan<u>t</u>al getallen</span>
<span class="t" style="top:170.0px;line-height:16px;font-size:12.5px;color:#4a4a4a;letter-spacing:-0.372px;left:875px;">Ma<u>x</u></span>
<span class="t" style="top:194.0px;line-height:16px;font-size:12.5px;color:#4a4a4a;letter-spacing:0.286px;left:875px;">M<u>i</u>n</span>
<div class="b" style="left:875px;top:213.8px;width:104px;height:1px;background:#e1e1e1;"></div>
<span class="t" style="top:220.0px;line-height:16px;font-size:12.5px;color:#4a4a4a;letter-spacing:-0.278px;left:875px;"><u>M</u>eer functies...</span>
</body></html>
